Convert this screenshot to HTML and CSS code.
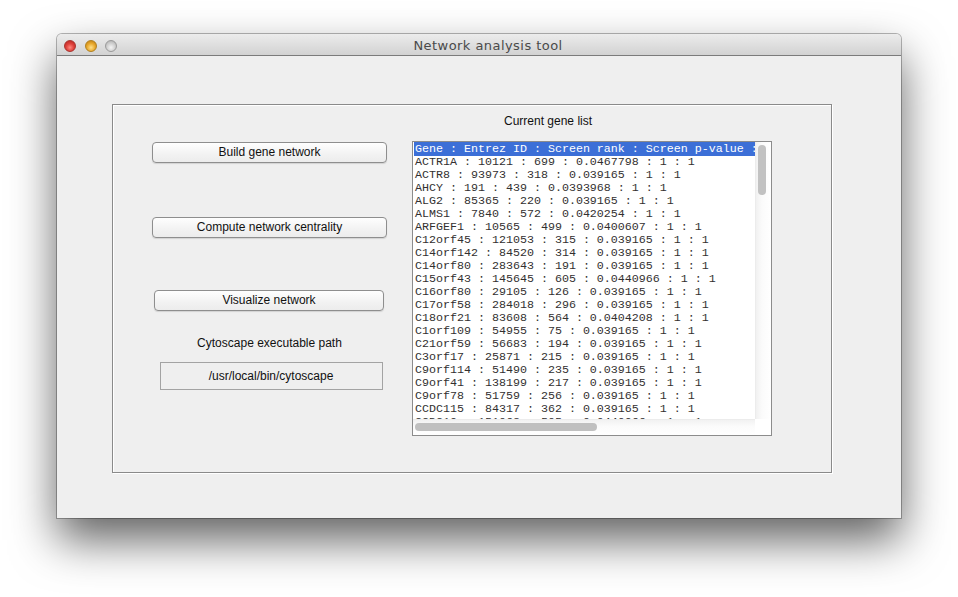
FILE: index.html
```html
<!DOCTYPE html>
<html>
<head>
<meta charset="utf-8">
<title>Network analysis tool</title>
<link rel="stylesheet" href="styles.css">
</head>
<body>
<div class="window">
  <div class="titlebar">
    <div class="lights">
      <span class="light red"></span>
      <span class="light yellow"></span>
      <span class="light grey"></span>
    </div>
    <div class="title">Network analysis tool</div>
  </div>
  <div class="content">
    <div class="frame">
      <div class="left">
        <button class="btn b1">Build gene network</button>
        <button class="btn b2">Compute network centrality</button>
        <button class="btn b3">Visualize network</button>
        <div class="label">Cytoscape executable path</div>
        <div class="field">/usr/local/bin/cytoscape</div>
      </div>
      <div class="right">
        <div class="list-title">Current gene list</div>
        <div class="listbox">
          <div class="rows">
            <div class="row sel">Gene : Entrez ID : Screen rank : Screen p-value : Network degree : Centrality</div>
            <div class="row">ACTR1A : 10121 : 699 : 0.0467798 : 1 : 1</div>
            <div class="row">ACTR8 : 93973 : 318 : 0.039165 : 1 : 1</div>
            <div class="row">AHCY : 191 : 439 : 0.0393968 : 1 : 1</div>
            <div class="row">ALG2 : 85365 : 220 : 0.039165 : 1 : 1</div>
            <div class="row">ALMS1 : 7840 : 572 : 0.0420254 : 1 : 1</div>
            <div class="row">ARFGEF1 : 10565 : 499 : 0.0400607 : 1 : 1</div>
            <div class="row">C12orf45 : 121053 : 315 : 0.039165 : 1 : 1</div>
            <div class="row">C14orf142 : 84520 : 314 : 0.039165 : 1 : 1</div>
            <div class="row">C14orf80 : 283643 : 191 : 0.039165 : 1 : 1</div>
            <div class="row">C15orf43 : 145645 : 605 : 0.0440966 : 1 : 1</div>
            <div class="row">C16orf80 : 29105 : 126 : 0.039165 : 1 : 1</div>
            <div class="row">C17orf58 : 284018 : 296 : 0.039165 : 1 : 1</div>
            <div class="row">C18orf21 : 83608 : 564 : 0.0404208 : 1 : 1</div>
            <div class="row">C1orf109 : 54955 : 75 : 0.039165 : 1 : 1</div>
            <div class="row">C21orf59 : 56683 : 194 : 0.039165 : 1 : 1</div>
            <div class="row">C3orf17 : 25871 : 215 : 0.039165 : 1 : 1</div>
            <div class="row">C9orf114 : 51490 : 235 : 0.039165 : 1 : 1</div>
            <div class="row">C9orf41 : 138199 : 217 : 0.039165 : 1 : 1</div>
            <div class="row">C9orf78 : 51759 : 256 : 0.039165 : 1 : 1</div>
            <div class="row">CCDC115 : 84317 : 362 : 0.039165 : 1 : 1</div>
            <div class="row">CCDC19 : 151063 : 505 : 0.0440966 : 1 : 1</div>
          </div>
          <div class="vbar"><div class="vthumb"></div></div>
          <div class="hbar"><div class="hthumb"></div></div>
          <div class="corner"></div>
        </div>
      </div>
    </div>
  </div>
</div>
</body>
</html>
```

FILE: styles.css
```css
html, body {
  margin: 0;
  padding: 0;
  background: #ffffff;
}

html {
  height: 100%;
}

body {
  font-family: "Liberation Sans", Arial, sans-serif;
  box-sizing: border-box;
  min-height: 597px;
  padding-top: 34px;
  overflow: hidden;
}

.window {
  margin-left: 57px;
  width: 844px;
  height: 484px;
  display: flex;
  flex-direction: column;
  background: #efefef;
  border-radius: 5px 5px 0 0;
  box-shadow: 0 22px 46px rgba(0, 0, 0, 0.62), 0 0 0 1px rgba(0, 0, 0, 0.28);
}

.titlebar {
  height: 22px;
  box-sizing: border-box;
  flex: none;
  display: flex;
  align-items: center;
  padding-top: 2px;
  border-radius: 5px 5px 0 0;
  border-bottom: 1px solid #7b7b7b;
  background: linear-gradient(#ececec, #d2d2d2);
}

.lights {
  display: flex;
  gap: 8.5px;
  padding-left: 7px;
}

.light {
  width: 12px;
  height: 12px;
  border-radius: 50%;
  box-sizing: border-box;
}

.red {
  background: radial-gradient(circle at 50% 65%, #ff8a80 0%, #e0443e 45%, #b3201b 100%);
  border: 1px solid #a8332e;
}

.yellow {
  background: radial-gradient(circle at 50% 65%, #ffe08a 0%, #e8a82c 50%, #b8780e 100%);
  border: 1px solid #b0801e;
}

.grey {
  background: radial-gradient(circle at 50% 65%, #f4f4f4 0%, #d0d0d0 50%, #a9a9a9 100%);
  border: 1px solid #9a9a9a;
}

.title {
  flex: 1;
  text-align: center;
  padding-right: 42px;
  font-family: "DejaVu Sans", sans-serif;
  font-size: 13px;
  letter-spacing: 0.45px;
  color: #4a4a4a;
}

.content {
  flex: 1;
  padding: 48px 0 0 55px;
}

.frame {
  width: 720px;
  height: 369px;
  box-sizing: border-box;
  border: 1px solid #8a8a8a;
  box-shadow: 1px 1px 0 #ffffff, inset 1px 1px 0 #ffffff;
  display: flex;
  padding-left: 39px;
}

.left {
  width: 235px;
  display: flex;
  flex-direction: column;
  align-items: center;
  padding-top: 37px;
}

.btn {
  display: block;
  box-sizing: border-box;
  height: 21px;
  padding: 0 0 1px 0;
  font-family: "Liberation Sans", Arial, sans-serif;
  font-size: 12px;
  color: #111;
  background: linear-gradient(#fefefe, #f2f2f2 60%, #ececec);
  border: 1px solid #8e8e8e;
  border-radius: 4px;
  box-shadow: 0 1px 1px rgba(0, 0, 0, 0.12);
}

.b1, .b2 {
  width: 235px;
}

.b2 {
  margin-top: 54px;
}

.b3 {
  width: 230px;
  margin-top: 52px;
  margin-right: 1px;
}

.label {
  margin-top: 25px;
  font-size: 12px;
  line-height: 14px;
  color: #111;
}

.field {
  margin-top: 12px;
  margin-left: 3px;
  width: 223px;
  height: 28px;
  box-sizing: border-box;
  border: 1px solid #a3a3a3;
  background: #efefef;
  font-size: 12px;
  color: #111;
  display: flex;
  align-items: center;
  justify-content: center;
}

.right {
  margin-left: 25px;
  width: 360px;
  padding-top: 9px;
}

.list-title {
  font-size: 12px;
  line-height: 14px;
  padding-left: 92px;
  color: #111;
}

.listbox {
  margin-top: 13px;
  width: 360px;
  height: 295px;
  box-sizing: border-box;
  border: 1px solid #8c8c8c;
  background: #ffffff;
  display: grid;
  grid-template-columns: 1fr 16px;
  grid-template-rows: 1fr 16px;
}

.rows {
  overflow: hidden;
  padding-left: 1px;
  font-family: "Liberation Mono", "Courier New", monospace;
  font-size: 11.67px;
  line-height: 13px;
  color: #333030;
}

.row {
  white-space: pre;
  box-sizing: border-box;
  padding: 1px 0 0 1px;
  height: 13px;
}

.row.sel {
  background: #3c6fd7;
  color: #ffffff;
  height: 14px;
  margin-bottom: -1px;
}

.vbar {
  background: linear-gradient(to right, #f1f1f1, #fbfbfb 40%, #ffffff);
  border-left: 1px solid #ececec;
}

.vthumb {
  width: 8px;
  height: 50px;
  margin: 3px 0 0 2px;
  border-radius: 4px;
  background: #c2c2c2;
}

.hbar {
  background: linear-gradient(#f2f2f2, #fbfbfb 40%, #ffffff);
  border-top: 1px solid #ececec;
}

.hthumb {
  width: 182px;
  height: 8px;
  margin: 3px 0 0 2px;
  border-radius: 4px;
  background: #c0c0c0;
}

.corner {
  background: #ffffff;
}
```
